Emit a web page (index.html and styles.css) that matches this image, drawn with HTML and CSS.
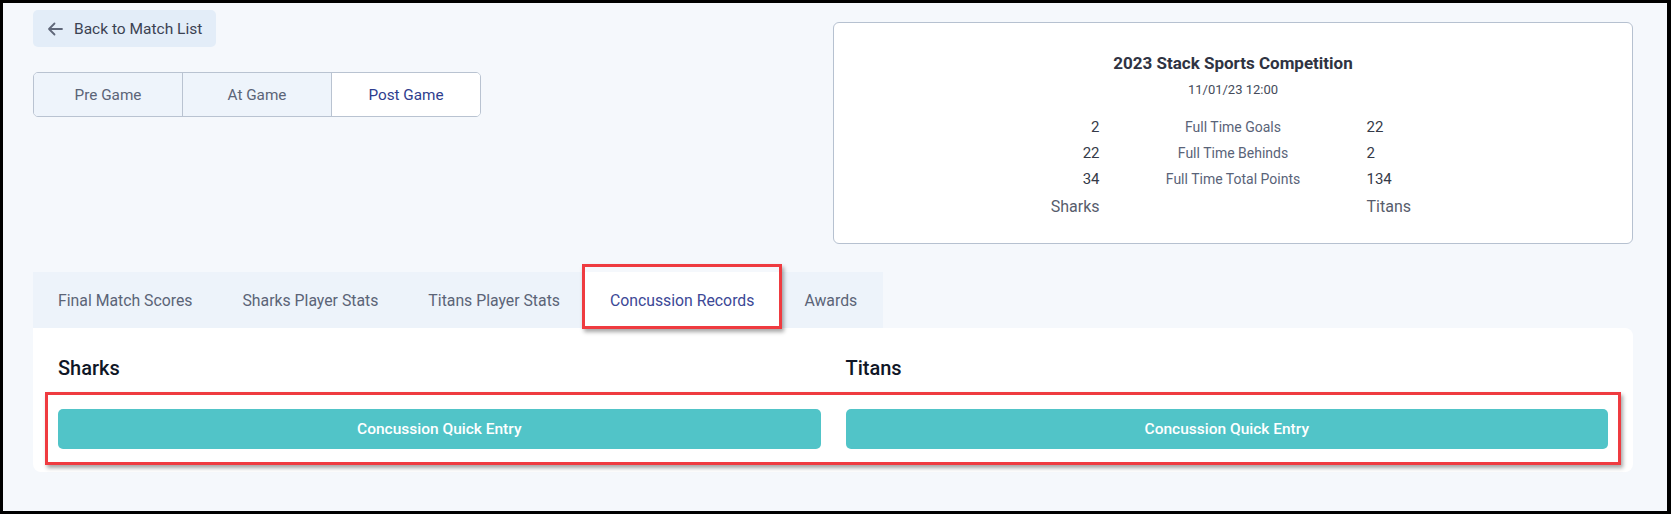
FILE: index.html
```html
<!DOCTYPE html>
<html lang="en">
<head>
<meta charset="utf-8">
<title>Post Game - Concussion Records</title>
<link rel="stylesheet" href="styles.css">
</head>
<body>
<div class="frame">
  <div class="container">
    <div class="top">
      <div class="left-col">
        <a class="back-btn" href="#">
          <svg class="back-icon" width="16" height="14" viewBox="0 0 16 14" aria-hidden="true">
            <path d="M15 7H2M7.5 1.5L2 7l5.5 5.5" fill="none" stroke="currentColor" stroke-width="1.8" stroke-linecap="round" stroke-linejoin="round"/>
          </svg>
          <span>Back to Match List</span>
        </a>
        <div class="segmented">
          <div class="seg">Pre Game</div>
          <div class="seg">At Game</div>
          <div class="seg seg-active">Post Game</div>
        </div>
      </div>
      <div class="score-card">
        <div class="comp-title">2023 Stack Sports Competition</div>
        <div class="comp-date">11/01/23 12:00</div>
        <div class="score-grid">
          <div class="val left">2</div><div class="lbl">Full Time Goals</div><div class="val">22</div>
          <div class="val left">22</div><div class="lbl">Full Time Behinds</div><div class="val">2</div>
          <div class="val left">34</div><div class="lbl">Full Time Total Points</div><div class="val">134</div>
          <div class="team left">Sharks</div><div class="lbl"></div><div class="team">Titans</div>
        </div>
      </div>
    </div>

    <div class="tabs">
      <div class="tab">Final Match Scores</div>
      <div class="tab">Sharks Player Stats</div>
      <div class="tab">Titans Player Stats</div>
      <div class="tab tab-active">Concussion Records<span class="highlight hl-tab"></span></div>
      <div class="tab">Awards</div>
    </div>
    <div class="panel">
      <div class="team-heads">
        <h3 class="team-head">Sharks</h3>
        <h3 class="team-head">Titans</h3>
      </div>
      <div class="btn-row">
        <button class="quick-btn">Concussion Quick Entry</button>
        <button class="quick-btn">Concussion Quick Entry</button>
        <span class="highlight hl-btns"></span>
      </div>
    </div>
  </div>
</div>
</body>
</html>
```

FILE: styles.css
```css
* { box-sizing: border-box; }
html, body { margin: 0; padding: 0; }
body {
  background: #000;
  font-family: Roboto, "Liberation Sans", Arial, sans-serif;
}
.frame {
  width: 1671px;
  height: 514px;
  border-style: solid;
  border-color: #000;
  border-width: 3px 4px 3px 3px;
  background: #f5f8fc;
  overflow: hidden;
}
.container {
  width: 1600px;
  margin-left: 30px;
  padding-top: 7px;
}
.top {
  display: grid;
  grid-template-columns: 800px 800px;
  height: 262px;
}
.left-col {
  display: flex;
  flex-direction: column;
  align-items: flex-start;
}
.back-btn {
  display: flex;
  align-items: center;
  height: 37px;
  padding: 0 14px;
  background: #e3edf8;
  border-radius: 5px;
  color: #3b4252;
  text-decoration: none;
  font-size: 15.5px;
  white-space: nowrap;
}
.back-icon { color: #5f6779; margin-right: 11px; flex-shrink: 0; }
.segmented {
  margin-top: 25px;
  display: flex;
  width: 448px;
  height: 45px;
  border: 1px solid #b9c3d1;
  border-radius: 5px;
  overflow: hidden;
}
.seg {
  flex: 1;
  display: flex;
  align-items: center;
  justify-content: center;
  background: #eef4fb;
  color: #5b6477;
  font-size: 15.3px;
  border-right: 1px solid #b9c3d1;
}
.seg:last-child { border-right: none; }
.seg-active { background: #fff; color: #2e3d8e; }

.score-card {
  margin-top: 12px;
  height: 222px;
  background: #fff;
  border: 1px solid #b6c1d0;
  border-radius: 6px;
  padding-top: 30px;
  display: flex;
  flex-direction: column;
  align-items: center;
}
.comp-title {
  font-size: 17px;
  font-weight: 700;
  color: #2f3342;
  line-height: 20px;
}
.comp-date {
  margin-top: 8px;
  font-size: 13px;
  color: #454b5a;
  line-height: 18px;
}
.score-grid {
  margin-top: 15px;
  width: 100%;
  display: grid;
  grid-template-columns: 1fr 267px 1fr;
  grid-template-rows: 26px 26px 26px 30px;
  align-items: center;
}
.val { font-size: 15px; color: #353a48; }
.val.left, .team.left { text-align: right; }
.lbl { text-align: center; font-size: 14px; color: #596378; }
.team { font-size: 16px; color: #575d6c; line-height: 30px; }

.tabs {
  display: flex;
  width: 850px;
  height: 56px;
  background: #edf3fa;
}
.tab {
  position: relative;
  display: flex;
  align-items: center;
  padding: 0 25px;
  font-size: 15.8px;
  color: #5b6477;
}
.tab-active { background: #fff; color: #3c4896; }
.highlight {
  position: absolute;
  border: 3px solid #ef3b40;
  box-shadow: 2px 3px 4px rgba(0,0,0,0.35);
  pointer-events: none;
}
.hl-tab { top: -8px; bottom: -1px; left: -3px; right: -3px; }

.panel {
  background: #fff;
  border-radius: 0 8px 8px 8px;
  padding: 25px 25px 23px;
}
.team-heads {
  display: grid;
  grid-template-columns: 1fr 1fr;
  column-gap: 25px;
}
.team-head {
  margin: 0;
  font-size: 20px;
  font-weight: 500;
  color: #0f1626;
  line-height: 30px;
}
.btn-row {
  position: relative;
  margin-top: 26px;
  display: grid;
  grid-template-columns: 1fr 1fr;
  column-gap: 25px;
}
.quick-btn {
  height: 40px;
  border: none;
  border-radius: 5px;
  background: #51c4c8;
  color: #fff;
  font-family: inherit;
  font-size: 15.5px;
  font-weight: 500;
}
.hl-btns { top: -17px; bottom: -16px; left: -13px; right: -13px; }
```
